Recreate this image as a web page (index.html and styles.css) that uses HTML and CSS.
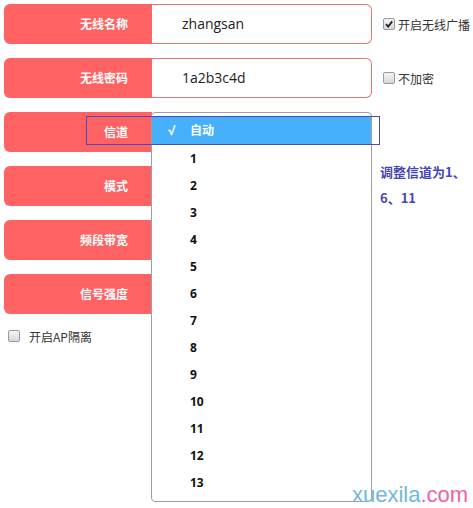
FILE: index.html
```html
<!DOCTYPE html>
<html lang="zh">
<head>
<meta charset="utf-8">
<link rel="stylesheet" href="styles.css">
</head>
<body>
<div class="form">
  <div class="row">
    <div class="label">无线名称</div>
    <div class="field">zhangsan</div>
    <div class="side"><span class="cb checked"><svg viewBox="0 0 10 10" width="10" height="10"><path d="M2 5.2 L4.2 7.6 L8.2 2.4" fill="none" stroke="#222" stroke-width="1.8"/></svg></span><span class="cbtext">开启无线广播</span></div>
  </div>
  <div class="row">
    <div class="label">无线密码</div>
    <div class="field">1a2b3c4d</div>
    <div class="side"><span class="cb"></span><span class="cbtext">不加密</span></div>
  </div>
  <div class="row">
    <div class="label">信道</div>
    <div class="field blank"></div>
    <div class="side"></div>
    <div class="dropdown">
      <div class="opt sel"><span class="tick">√</span>自动</div>
      <div class="opt">1</div>
      <div class="opt">2</div>
      <div class="opt">3</div>
      <div class="opt">4</div>
      <div class="opt">5</div>
      <div class="opt">6</div>
      <div class="opt">7</div>
      <div class="opt">8</div>
      <div class="opt">9</div>
      <div class="opt">10</div>
      <div class="opt">11</div>
      <div class="opt">12</div>
      <div class="opt">13</div>
    </div>
    <div class="mark"></div>
  </div>
  <div class="row">
    <div class="label">模式</div>
    <div class="field blank"></div>
    <div class="side"><div class="note">调整信道为1、<br>6、11</div></div>
  </div>
  <div class="row">
    <div class="label">频段带宽</div>
    <div class="field blank"></div>
    <div class="side"></div>
  </div>
  <div class="row">
    <div class="label">信号强度</div>
    <div class="field blank"></div>
    <div class="side"></div>
  </div>
  <div class="iso"><span class="cb"></span><span class="cbtext">开启AP隔离</span></div>
</div>
<div class="wm"><span class="wm-a">xuexila</span><span class="wm-b">.com</span></div>
</body>
</html>
```
FILE: styles.css
```css
html, body {
  margin: 0;
  padding: 0;
  background: #fff;
  width: 473px;
  height: 508px;
  overflow: hidden;
  font-family: "Noto Sans CJK SC", "Noto Sans", sans-serif;
}
.form {
  padding: 4px 0 0 4px;
  position: relative;
}
.row {
  display: flex;
  height: 40px;
  margin-bottom: 14px;
  position: relative;
}
.label {
  width: 148px;
  height: 40px;
  box-sizing: border-box;
  background: #ff6262;
  border-radius: 6px 0 0 6px;
  color: #fff;
  font-weight: bold;
  font-size: 12px;
  line-height: 40px;
  text-align: right;
  padding-right: 24px;
}
.field {
  width: 220px;
  height: 40px;
  box-sizing: border-box;
  border: 1px solid #e2777a;
  border-left: none;
  border-radius: 0 6px 6px 0;
  padding-left: 30px;
  font-size: 14px;
  line-height: 38px;
  color: #222;
  font-family: "Open Sans", "Noto Sans", sans-serif;
}
.field.blank {
  border: none;
}
.side {
  display: flex;
  align-items: center;
  padding-left: 11px;
  white-space: nowrap;
  position: relative;
}
.cb {
  display: inline-flex;
  align-items: center;
  justify-content: center;
  width: 12px;
  height: 12px;
  box-sizing: border-box;
  border: 1px solid #9a9a9a;
  border-radius: 2px;
  background: linear-gradient(#f4f4f4, #d8d8d8);
  flex: none;
}
.cbtext {
  font-size: 12px;
  color: #333;
  margin-left: 3px;
}
.note {
  position: relative;
  top: -7px;
  margin-left: -3px;
  font-size: 13px;
  font-weight: bold;
  line-height: 26px;
  color: #4545b5;
  align-self: flex-start;
}
.dropdown {
  position: absolute;
  left: 147px;
  top: 0;
  width: 221px;
  box-sizing: border-box;
  border: 1px solid #a0a0a0;
  border-radius: 4px;
  background: #fff;
  padding: 4px 0 5px;
  z-index: 2;
}
.opt {
  height: 27px;
  line-height: 27px;
  font-size: 12px;
  font-weight: bold;
  color: #111;
  padding-left: 38px;
  font-family: "Open Sans", "Noto Sans CJK SC", sans-serif;
}
.opt.sel {
  height: 28px;
  line-height: 28px;
  background: #46b0fc;
  color: #fff;
  padding-left: 16px;
}
.tick {
  display: inline-block;
  width: 22px;
}
.mark {
  position: absolute;
  left: 82px;
  top: 4px;
  width: 294px;
  height: 29px;
  box-sizing: border-box;
  border: 1px solid #4a4ab8;
  z-index: 3;
}
.iso {
  display: flex;
  align-items: center;
  padding-left: 4px;
  margin-top: -2px;
  height: 20px;
}
.iso .cbtext {
  margin-left: 9px;
}
.wm {
  position: absolute;
  left: 352px;
  top: 484px;
  font-family: "Liberation Sans", Arial, sans-serif;
  font-size: 22px;
  line-height: 22px;
  white-space: nowrap;
  z-index: 4;
}
.wm-a { color: #72b6e2; }
.wm-b { color: #ee62ab; }
```
